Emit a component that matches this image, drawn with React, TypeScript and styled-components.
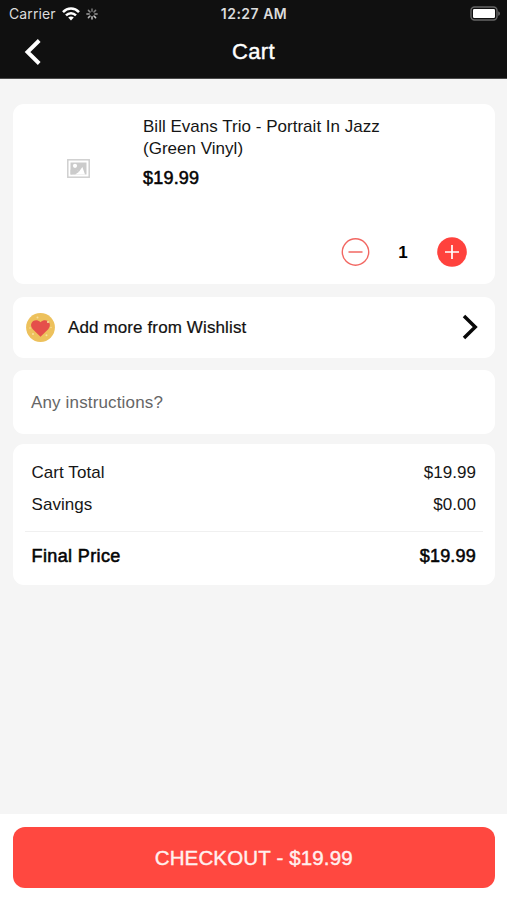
import React from "react";
import styled, { createGlobalStyle } from "styled-components";

const GlobalStyle = createGlobalStyle`
  *, *::before, *::after { box-sizing: border-box; }
  html, body { margin: 0; padding: 0; }
  body { font-family: "Liberation Sans", Arial, sans-serif; }
  svg { display: block; flex: none; }
`;

const Screen = styled.div`
  display: flex;
  flex-direction: column;
  width: 100%;
  height: 900px;
  background: #f5f5f5;
  overflow: hidden;
`;

const Header = styled.header`
  flex: none;
  height: 79px;
  background: #101010;
  border-bottom: 1px solid #4a4a4a;
`;

const StatusBar = styled.div`
  display: grid;
  grid-template-columns: 1fr auto 1fr;
  align-items: center;
  height: 27px;
  padding: 0 6px 0 9px;
  font-family: Inter, sans-serif;
  color: #dcdcdc;
`;

const StatusGroup = styled.div`
  display: flex;
  align-items: center;
  gap: 6px;
`;

const BatteryGroup = styled(StatusGroup)`
  justify-content: flex-end;
`;

const Carrier = styled.span`
  font-size: 14px;
  letter-spacing: 0.1px;
  line-height: 17px;
`;

const Clock = styled.span`
  font-size: 14px;
  font-weight: 600;
  letter-spacing: 0.5px;
  line-height: 17px;
  margin-right: 2px;
`;

const NavBar = styled.nav`
  display: grid;
  grid-template-columns: 60px 1fr 60px;
  align-items: center;
  height: 50px;
`;

const IconButton = styled.button`
  display: flex;
  align-items: center;
  justify-content: center;
  padding: 0;
  border: 0;
  background: none;
`;

const BackButton = styled(IconButton)`
  padding-left: 6px;
`;

const Title = styled.h1`
  margin: 0;
  text-align: center;
  color: #fff;
  font-size: 22px;
  font-weight: 400;
  line-height: 26px;
  letter-spacing: 0.4px;
  -webkit-text-stroke: 0.4px #fff;
`;

const Content = styled.main`
  flex: 1;
  padding: 25px 12.5px 0 13px;
`;

const Card = styled.section<{ $height: number; $gap: number }>`
  height: ${(p) => p.$height}px;
  margin-bottom: ${(p) => p.$gap}px;
  border-radius: 11px;
  background: #fff;
`;

const ProductCard = styled(Card)`
  display: grid;
  grid-template-columns: 130px 1fr;
`;

const Thumbnail = styled.div`
  display: flex;
  align-items: center;
  justify-content: center;
  height: 129px;
`;

const ProductInfo = styled.div`
  display: flex;
  flex-direction: column;
  padding: 12px 28px 17px 0;
`;

const ProductName = styled.div`
  width: 260px;
  color: #151515;
  font-size: 17px;
  line-height: 22px;
  letter-spacing: 0.02px;
`;

const Strong = styled.span`
  color: #050505;
  font-size: 18px;
  line-height: 22px;
  letter-spacing: 0.2px;
  -webkit-text-stroke: 0.55px #050505;
`;

const Price = styled(Strong)`
  margin-top: 7px;
`;

const Stepper = styled.div`
  display: flex;
  align-items: center;
  justify-content: flex-end;
  margin-top: auto;
`;

const Quantity = styled.span`
  width: 67px;
  padding-top: 2px;
  text-align: center;
  font-size: 17px;
  font-weight: 700;
  line-height: 28px;
`;

const WishlistCard = styled(Card)`
  display: flex;
  align-items: center;
  padding: 0 16px 0 13px;
`;

const WishlistLabel = styled.span`
  flex: 1;
  margin-left: 13px;
  padding-top: 2px;
  color: #111;
  font-size: 17px;
  line-height: 22px;
  letter-spacing: 0.12px;
  -webkit-text-stroke: 0.2px #111;
`;

const NoteCard = styled(Card)`
  display: flex;
  align-items: center;
`;

const NoteInput = styled.span`
  padding: 2px 0 0 18px;
  color: #666;
  font-size: 17px;
  line-height: 22px;
  letter-spacing: 0.15px;
`;

const TotalsCard = styled(Card)`
  padding: 13px 12px 0;
`;

const TotalRow = styled.div`
  display: flex;
  align-items: center;
  justify-content: space-between;
  height: 32px;
  padding: 0 6.5px;
  color: #161616;
  font-size: 17px;
  letter-spacing: 0.06px;
`;

const FinalLabel = styled(Strong)`
  letter-spacing: 0.38px;
`;

const Divider = styled.hr`
  height: 1px;
  margin: 10px 0 8px;
  border: 0;
  background: #f0f0f0;
`;

const Footer = styled.footer`
  flex: none;
  height: 86px;
  padding: 12.5px 12.5px 0 13px;
  background: #fff;
`;

const CheckoutButton = styled.button`
  width: 100%;
  height: 61px;
  padding: 2px 0 0;
  border: 0;
  border-radius: 12px;
  background: #ff4840;
  color: #fff0ee;
  font-family: inherit;
  font-size: 20.5px;
  letter-spacing: 0.15px;
  -webkit-text-stroke: 0.4px #fff0ee;
`;

const WifiIcon = () => (
  <svg width="18" height="14" viewBox="0 0 18 14" fill="none" stroke="#fff" strokeWidth="2.5">
    <path d="M1 5.1C5.5.4 12.5.4 17 5.1" />
    <path d="M4 8.3C6.9 5.4 11.1 5.4 14 8.3" />
    <path d="M9 13.4 6.2 10.5c1.6-1.5 4-1.5 5.6 0Z" fill="#fff" stroke="none" />
  </svg>
);

const spokes = [0.5, 0.55, 0.65, 0.9, 0.85, 0.8, 0.7, 0.6];

const ActivityIcon = () => (
  <svg width="12" height="12" viewBox="-6 -6 12 12" stroke="#ddd" strokeWidth="1.5" strokeLinecap="round">
    {spokes.map((opacity, i) => (
      <path key={i} d="M0-2.8V-5.1" opacity={opacity} transform={`rotate(${i * 45})`} />
    ))}
  </svg>
);

const BatteryIcon = () => (
  <svg width="31" height="15" viewBox="0 0 31 15">
    <rect x="1" y="1" width="26" height="13" rx="3.5" fill="#101010" stroke="#666" strokeWidth="1.4" />
    <rect x="3" y="3" width="22" height="9" rx="1.2" fill="#fff" />
    <path d="M28.3 5.2c2 .8 2 3.8 0 4.6Z" fill="#777" />
  </svg>
);

const BackIcon = () => (
  <svg width="18" height="26" viewBox="0 0 18 26" fill="none" stroke="#fff" strokeWidth="3.9">
    <path d="M15.2 1.5 3.5 13l11.7 11.5" />
  </svg>
);

const ForwardIcon = () => (
  <svg width="17" height="26" viewBox="0 0 17 26" fill="none" stroke="#080808" strokeWidth="3.5">
    <path d="M2 2 13.2 13 2 24" />
  </svg>
);

const PictureIcon = () => (
  <svg width="23" height="19" viewBox="0 0 23 19">
    <rect x="0.8" y="0.8" width="21.4" height="17.4" fill="#fff" stroke="#cfcfcf" strokeWidth="1.5" />
    <path d="M3.5 3.5h16v12h-16Z" fill="#cbcbcb" />
    <circle cx="8" cy="6.8" r="2.1" fill="#fff" />
    <path d="M5 15.5 9.6 11l2.2 2 3.6-5 2.6 7.5Z" fill="#fff" />
    <path d="M3.5 15.5v-5l2.5 1.7 3.6-1.4 2.2 2.2-3.6 2.5Z" fill="#cbcbcb" />
  </svg>
);

const MinusIcon = () => (
  <svg width="29" height="30" viewBox="0 0 29 30" fill="none" stroke="#f26762">
    <circle cx="14.5" cy="15" r="13.2" strokeWidth="1.4" />
    <path d="M7.5 15h14" strokeWidth="1.5" />
  </svg>
);

const PlusIcon = () => (
  <svg width="30" height="30" viewBox="0 0 30 30">
    <circle cx="15" cy="15" r="14.8" fill="#ff423d" />
    <path d="M8 15h14M15 8v14" stroke="#fff" strokeWidth="1.7" />
  </svg>
);

const HeartIcon = () => (
  <svg width="29" height="29" viewBox="0 0 29 29">
    <circle cx="14.5" cy="14.5" r="14.4" fill="#edc15c" />
    <path
      d="M14.5 23.8 6.8 16.2C1.9 11 8.5 3.9 14.5 9.2c6-5.3 12.6 1.8 7.7 7Z"
      fill="#e54f4b"
    />
    <g fill="#f7df9f">
      <circle cx="11.5" cy="4.5" r="1" />
      <circle cx="22" cy="9" r="1.1" />
      <circle cx="4" cy="15" r=".8" />
      <circle cx="7" cy="21" r="1" />
      <circle cx="20.5" cy="22.2" r="1" />
      <circle cx="25" cy="14.5" r=".7" />
    </g>
  </svg>
);

export default function App() {
  return (
    <>
      <GlobalStyle />
      <Screen>
        <Header>
          <StatusBar>
            <StatusGroup>
              <Carrier>Carrier</Carrier>
              <WifiIcon />
              <ActivityIcon />
            </StatusGroup>
            <Clock>12:27 AM</Clock>
            <BatteryGroup>
              <BatteryIcon />
            </BatteryGroup>
          </StatusBar>
          <NavBar>
            <BackButton aria-label="Back">
              <BackIcon />
            </BackButton>
            <Title>Cart</Title>
          </NavBar>
        </Header>

        <Content>
          <ProductCard $height={180} $gap={12.5}>
            <Thumbnail>
              <PictureIcon />
            </Thumbnail>
            <ProductInfo>
              <ProductName>Bill Evans Trio - Portrait In Jazz (Green Vinyl)</ProductName>
              <Price>$19.99</Price>
              <Stepper>
                <IconButton aria-label="Decrease quantity">
                  <MinusIcon />
                </IconButton>
                <Quantity>1</Quantity>
                <IconButton aria-label="Increase quantity">
                  <PlusIcon />
                </IconButton>
              </Stepper>
            </ProductInfo>
          </ProductCard>

          <WishlistCard $height={61.5} $gap={12}>
            <HeartIcon />
            <WishlistLabel>Add more from Wishlist</WishlistLabel>
            <ForwardIcon />
          </WishlistCard>

          <NoteCard $height={64} $gap={9.5}>
            <NoteInput>Any instructions?</NoteInput>
          </NoteCard>

          <TotalsCard $height={141} $gap={0}>
            <TotalRow>
              <span>Cart Total</span>
              <span>$19.99</span>
            </TotalRow>
            <TotalRow>
              <span>Savings</span>
              <span>$0.00</span>
            </TotalRow>
            <Divider />
            <TotalRow>
              <FinalLabel>Final Price</FinalLabel>
              <Strong>$19.99</Strong>
            </TotalRow>
          </TotalsCard>
        </Content>

        <Footer>
          <CheckoutButton>CHECKOUT - $19.99</CheckoutButton>
        </Footer>
      </Screen>
    </>
  );
}
